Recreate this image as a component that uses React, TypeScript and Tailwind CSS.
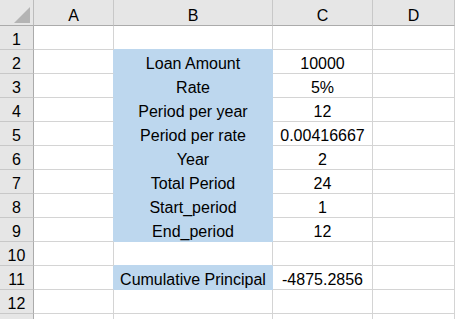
const cols = ["A", "B", "C", "D"];

const data: Record<number, [string, string]> = {
  2: ["Loan Amount", "10000"],
  3: ["Rate", "5%"],
  4: ["Period per year", "12"],
  5: ["Period per rate", "0.00416667"],
  6: ["Year", "2"],
  7: ["Total Period", "24"],
  8: ["Start_period", "1"],
  9: ["End_period", "12"],
  11: ["Cumulative Principal", "-4875.2856"],
};

const isBlue = (r: number) => (r >= 2 && r <= 9) || r === 11;

export default function App() {
  const rows = Array.from({ length: 13 }, (_, i) => i + 1);

  return (
    <div
      className="h-[319px] w-[455px] overflow-hidden bg-white text-[16px] leading-none text-black"
      style={{ fontFamily: '"Liberation Sans", Arial, sans-serif' }}
    >
      <div className="grid grid-cols-[34px_80px_159px_100px_82px]">
        {/* header row */}
        <div className="relative h-[26px] border-b border-r border-b-[#ababab] border-r-[#bcbcbc] bg-[#e6e6e6]">
          <svg className="absolute left-0 top-0" width="33" height="25" viewBox="0 0 33 25">
            <polygon points="30,7 30,23 14,23" fill="#b4b4b4" />
          </svg>
        </div>
        {cols.map((c) => (
          <div
            key={c}
            className="flex h-[26px] items-end justify-center border-b border-r border-b-[#ababab] border-r-[#c8c8c8] bg-[#e6e6e6] pb-[1px]"
          >
            {c}
          </div>
        ))}

        {rows.map((r) => {
          const d = data[r];
          const blue = isBlue(r);
          const blueBelow = isBlue(r + 1);
          return [
            <div
              key={`h${r}`}
              className="flex h-[24px] items-end justify-center border-b border-r border-b-[#c8c8c8] border-r-[#ababab] bg-[#e6e6e6] pb-[1px]"
            >
              {r <= 12 ? r : ""}
            </div>,
            <div
              key={`a${r}`}
              className={`h-[24px] border-b border-r border-b-[#d4d4d4] ${blue ? "border-r-[#bdd7ee]" : "border-r-[#d4d4d4]"}`}
            />,
            <div
              key={`b${r}`}
              className={`flex h-[24px] items-end justify-center border-b border-r pb-[1px] ${
                blue
                  ? "border-[#bdd7ee] bg-[#bdd7ee]"
                  : blueBelow
                  ? "border-b-[#bdd7ee] border-r-[#d4d4d4]"
                  : "border-[#d4d4d4]"
              }`}
            >
              {d ? d[0] : ""}
            </div>,
            <div
              key={`c${r}`}
              className="flex h-[24px] items-end justify-center border-b border-r border-[#d4d4d4] pb-[1px]"
            >
              {d ? d[1] : ""}
            </div>,
            <div key={`d${r}`} className="h-[24px] border-b border-r border-[#d4d4d4]" />,
          ];
        })}
      </div>
    </div>
  );
}
